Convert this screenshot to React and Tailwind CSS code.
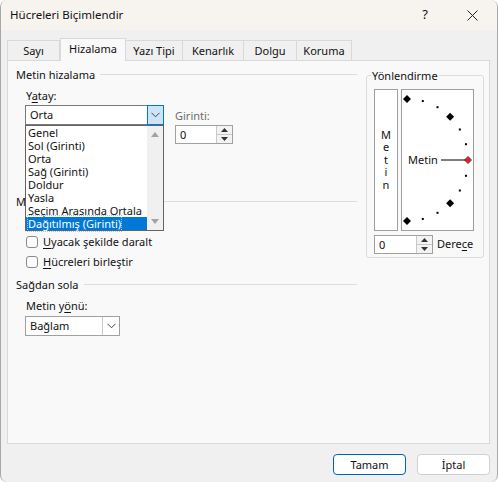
import React from 'react';

const FONT = { fontFamily: '"Noto Sans", "Open Sans", sans-serif' };

const TABS = ['Sayı', 'Hizalama', 'Yazı Tipi', 'Kenarlık', 'Dolgu', 'Koruma'];
const TAB_W = [53, 66, 57, 61, 53, 55];

const HORIZ = [
    'Genel', 'Sol (Girinti)', 'Orta', 'Sağ (Girinti)', 'Doldur', 'Yasla',
    'Seçim Arasında Ortala', 'Dağıtılmış (Girinti)',
];

function Chevron() {
    return (
        <svg width="9" height="6" viewBox="0 0 9 6">
            <path d="M0.5 0.8 L4.5 4.8 L8.5 0.8" fill="none" stroke="#444" strokeWidth="1" />
        </svg>
    );
}

function SectionHeader({ children }) {
    return (
        <div className="flex items-center gap-[5px] h-[15px] leading-[15px]">
            <span>{children}</span>
            <div className="flex-1 h-px bg-[#dcdcdc]" />
        </div>
    );
}

function Spin({ value, width }) {
    return (
        <div className={`flex h-[19px] bg-white border border-[#a0a0a0] ${width}`}>
            <div className="flex-1 pl-[4px] leading-[17px]">{value}</div>
            <div className="w-[16px] flex flex-col border-l border-[#c8c8c8]">
                <div className="flex-1 flex items-center justify-center border-b border-[#c8c8c8] bg-[#f3f3f3]">
                    <svg width="7" height="4" viewBox="0 0 7 4"><path d="M0 4 L3.5 0 L7 4 Z" fill="#333" /></svg>
                </div>
                <div className="flex-1 flex items-center justify-center bg-[#f3f3f3]">
                    <svg width="7" height="4" viewBox="0 0 7 4"><path d="M0 0 L3.5 4 L7 0 Z" fill="#333" /></svg>
                </div>
            </div>
        </div>
    );
}

function Check({ label, u }) {
    return (
        <div className="flex items-center h-[20px] ml-[10px]">
            <div className="w-[12px] h-[12px] rounded-[3px] border border-[#8a8a8a] bg-[#fbfbfb]" />
            <span className="ml-[5px]">
                <span className="underline underline-offset-2">{u}</span>{label}
            </span>
        </div>
    );
}

function Dial() {
    const pts = [];
    for (let a = 90; a >= -90; a -= 15) {
        const r = (a * Math.PI) / 180;
        pts.push({ a, x: 5 + 61 * Math.cos(r), y: 70 - 61 * Math.sin(r) });
    }
    return (
        <svg width="71" height="140" viewBox="0 0 71 140">
            {pts.map(p => {
                if (p.a === 0) {
                    return (
                        <path key={p.a} d={`M${p.x - 3.5} ${p.y} L${p.x} ${p.y - 3.5} L${p.x + 3.5} ${p.y} L${p.x} ${p.y + 3.5} Z`}
                            fill="#e0202a" stroke="#7a1010" strokeWidth="0.8" />
                    );
                }
                if (p.a % 45 === 0) {
                    return (
                        <path key={p.a} d={`M${p.x - 4} ${p.y} L${p.x} ${p.y - 4} L${p.x + 4} ${p.y} L${p.x} ${p.y + 4} Z`} fill="#000" />
                    );
                }
                return <rect key={p.a} x={p.x - 1} y={p.y - 1} width="2" height="2" fill="#000" />;
            })}
            <text x="6" y="74" fontSize="11" fill="#111" style={FONT}>Metin</text>
            <line x1="39" y1="70" x2="63" y2="70" stroke="#000" strokeWidth="1" />
        </svg>
    );
}

export default function App() {
    return (
        <div style={FONT} className="w-[498px] h-[482px] bg-[#f0f0f0] text-[11px] text-[#111] flex flex-col overflow-hidden rounded-[7px] border-l border-r border-[#a8a8a8]">
            {/* title bar */}
            <div className="h-[30px] shrink-0 bg-[#f7f4ef] flex items-center pl-[9px]">
                <span className="flex-1 text-[11.5px]">Hücreleri Biçimlendir</span>
                <span className="w-[14px] text-center mr-[35px] text-[13px]">?</span>
                <svg width="11" height="11" viewBox="0 0 11 11" className="mr-[19px]">
                    <path d="M0.5 0.5 L10.5 10.5 M10.5 0.5 L0.5 10.5" stroke="#222" strokeWidth="1" />
                </svg>
            </div>

            {/* tabs */}
            <div className="h-[30px] shrink-0 flex items-end pl-[6px]">
                {TABS.map((t, i) => (
                    i === 1 ? (
                        <div key={t} style={{ width: TAB_W[i] }} className="h-[23px] -mb-px relative z-10 bg-[#f9f9f9] border border-b-0 border-[#d9d9d9] flex items-center justify-center pb-[1px]">
                            {t}
                        </div>
                    ) : (
                        <div key={t} style={{ width: TAB_W[i] }} className="h-[20px] bg-[#f0f0f0] border border-b-0 border-l-0 first:border-l border-[#d9d9d9] flex items-center justify-center pt-[1px]">
                            {t}
                        </div>
                    )
                ))}
            </div>

            {/* panel */}
            <div className="ml-[6px] w-[483px] h-[384px] shrink-0 bg-[#f9f9f9] border border-[#d9d9d9] flex pt-[6px]">
                {/* left column */}
                <div className="w-[349px] pl-[8px] flex flex-col">
                    <SectionHeader>Metin hizalama</SectionHeader>
                    <div className="mt-[6px] ml-[10px] h-[15px] leading-[15px]">
                        Y<span className="underline underline-offset-2">a</span>tay:
                    </div>
                    <div className="mt-[2px] ml-[9px] flex items-start">
                        <div className="relative w-[139px] h-[20px] bg-white border border-[#7a7a7a] flex">
                            <div className="flex-1 pl-[4px] leading-[18px]">Orta</div>
                            <div className="w-[17px] -mr-px -my-px h-[20px] bg-[#cce4f7] border border-[#0078d4] flex items-center justify-center">
                                <Chevron />
                            </div>
                            {/* open list */}
                            <div className="absolute left-[-1px] top-[19px] z-20 w-[139px] h-[106px] bg-white border border-[#646464] flex">
                                <div className="flex-1 flex flex-col">
                                    {HORIZ.map((h, i) => (
                                        <div key={h} className={`h-[13px] leading-[13px] pl-[2px] whitespace-nowrap ${i === 7 ? 'bg-[#0078d7] text-white' : ''}`}>
                                            {i === 7 ? (
                                                <span className="outline outline-1 outline-dotted outline-[#9cc8ef]">{h}</span>
                                            ) : h}
                                        </div>
                                    ))}
                                </div>
                                <div className="w-[16px] bg-[#f0f0f0] flex flex-col items-center justify-between py-[6px]">
                                    <svg width="8" height="5" viewBox="0 0 8 5"><path d="M0 5 L4 0 L8 5 Z" fill="#a3a3a3" /></svg>
                                    <svg width="8" height="5" viewBox="0 0 8 5"><path d="M0 0 L4 5 L8 0 Z" fill="#a3a3a3" /></svg>
                                </div>
                            </div>
                        </div>
                        <div className="ml-[11px] flex flex-col">
                            <div className="mt-[3px] h-[15px] leading-[15px] text-[#6d6d6d]">Girinti:</div>
                            <div className="mt-[2px]"><Spin value="0" width="w-[58px]" /></div>
                        </div>
                    </div>
                    {/* space covered by the open list */}
                    <div className="h-[50px]" />
                    <SectionHeader>Metin denetimi</SectionHeader>
                    <div className="mt-[23px] flex flex-col">
                        <Check u="U" label="yacak şekilde daralt" />
                        <Check u="H" label="ücreleri birleştir" />
                    </div>
                    <div className="mt-[5px]">
                        <SectionHeader>Sağdan sola</SectionHeader>
                    </div>
                    <div className="mt-[6px] ml-[10px] h-[15px] leading-[15px]">
                        Metin y<span className="underline underline-offset-2">ö</span>nü:
                    </div>
                    <div className="mt-[3px] ml-[9px] w-[95px] h-[20px] bg-white border border-[#a0a0a0] flex">
                        <div className="flex-1 pl-[4px] leading-[18px]">Bağlam</div>
                        <div className="w-[17px] border-l border-[#c8c8c8] flex items-center justify-center">
                            <Chevron />
                        </div>
                    </div>
                </div>

                {/* right column: orientation */}
                <div className="ml-[9px] w-[118px]">
                    <div className="relative mt-[8px] h-[183px] border border-[#dcdcdc] rounded-[3px] pt-[13px] pl-[7px]">
                        <span className="absolute -top-[8px] left-[4px] px-[1px] h-[15px] leading-[15px] bg-[#f9f9f9]">Yönlendirme</span>
                        <div className="flex">
                            <div className="w-[24px] h-[142px] bg-white border border-[#a0a0a0] flex flex-col items-center justify-center leading-[12.5px]">
                                {'Metin'.split('').map((c, i) => <span key={i}>{c}</span>)}
                            </div>
                            <div className="ml-[3px] w-[73px] h-[142px] bg-white border border-[#a0a0a0]">
                                <Dial />
                            </div>
                        </div>
                        <div className="mt-[4px] flex items-center">
                            <Spin value="0" width="w-[59px]" />
                            <span className="ml-[4px]">
                                Dere<span className="underline underline-offset-2">c</span>e
                            </span>
                        </div>
                    </div>
                </div>
            </div>

            {/* buttons */}
            <div className="flex justify-end gap-[11px] pr-[7px] pt-[10px]">
                <button className="w-[73px] h-[21px] bg-white border border-[#005fb8] rounded-[4px] leading-[19px]">Tamam</button>
                <button className="w-[73px] h-[21px] bg-white border border-[#d0d0d0] rounded-[4px] leading-[19px]">İptal</button>
            </div>
        </div>
    );
}
